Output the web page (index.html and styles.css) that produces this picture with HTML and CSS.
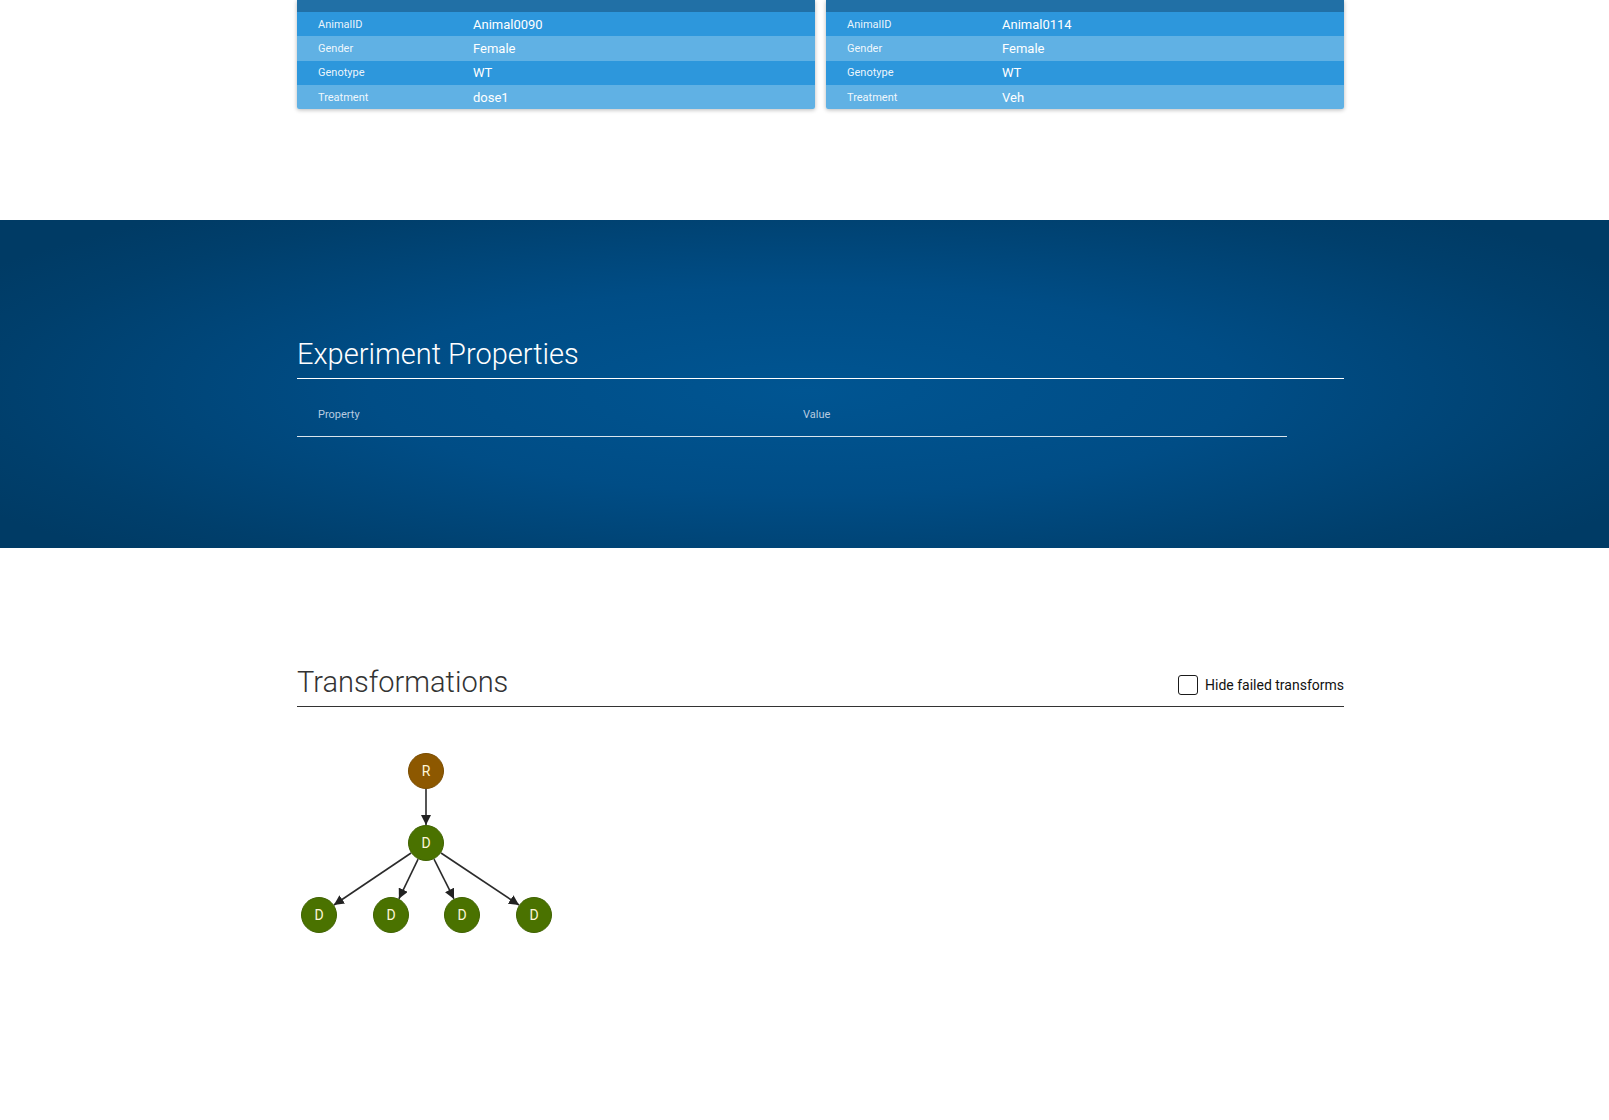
FILE: index.html
```html
<!DOCTYPE html>
<html>
<head>
<meta charset="utf-8">
<link rel="stylesheet" href="styles.css">
</head>
<body>
<section class="animals">
  <div class="wrap cards">
    <div class="card">
      <div class="card-head"></div>
      <div class="row odd"><span class="k">AnimalID</span><span class="v">Animal0090</span></div>
      <div class="row even"><span class="k">Gender</span><span class="v">Female</span></div>
      <div class="row odd"><span class="k">Genotype</span><span class="v">WT</span></div>
      <div class="row even"><span class="k">Treatment</span><span class="v">dose1</span></div>
    </div>
    <div class="card">
      <div class="card-head"></div>
      <div class="row odd"><span class="k">AnimalID</span><span class="v">Animal0114</span></div>
      <div class="row even"><span class="k">Gender</span><span class="v">Female</span></div>
      <div class="row odd"><span class="k">Genotype</span><span class="v">WT</span></div>
      <div class="row even"><span class="k">Treatment</span><span class="v">Veh</span></div>
    </div>
  </div>
</section>

<section class="band">
  <div class="wrap">
    <h2 class="title light">Experiment Properties</h2>
    <table class="props">
      <thead>
        <tr><th class="c1">Property</th><th>Value</th></tr>
      </thead>
    </table>
  </div>
</section>

<section class="transforms">
  <div class="wrap">
    <div class="t-head">
      <h2 class="title dark">Transformations</h2>
      <label class="hide"><input type="checkbox" class="cb"><span>Hide failed transforms</span></label>
    </div>
    <svg class="graph" width="260" height="200" viewBox="0 0 260 200">
      <defs>
        <marker id="arr" markerUnits="userSpaceOnUse" markerWidth="10" markerHeight="10" refX="10" refY="5" orient="auto">
          <path d="M0,0 L10,5 L0,10 z" fill="#222"/>
        </marker>
      </defs>
      <g class="edges" stroke="#2b2b2b" stroke-width="1.6">
        <line x1="129" y1="50" x2="129" y2="86" marker-end="url(#arr)"/>
        <line x1="114.1" y1="114" x2="36.9" y2="166" marker-end="url(#arr)"/>
        <line x1="121.1" y1="120.2" x2="101.9" y2="159.8" marker-end="url(#arr)"/>
        <line x1="137" y1="120.1" x2="157" y2="159.9" marker-end="url(#arr)"/>
        <line x1="144" y1="114" x2="222" y2="166" marker-end="url(#arr)"/>
      </g>
      <g class="nodes">
        <circle cx="129" cy="32" r="17.5" fill="#8d5800" stroke="#7a4c00" stroke-width="1"/>
        <circle cx="129" cy="104" r="17.5" fill="#4a7200" stroke="#3f6200" stroke-width="1"/>
        <circle cx="22" cy="176" r="17.5" fill="#4a7200" stroke="#3f6200" stroke-width="1"/>
        <circle cx="94" cy="176" r="17.5" fill="#4a7200" stroke="#3f6200" stroke-width="1"/>
        <circle cx="165" cy="176" r="17.5" fill="#4a7200" stroke="#3f6200" stroke-width="1"/>
        <circle cx="237" cy="176" r="17.5" fill="#4a7200" stroke="#3f6200" stroke-width="1"/>
      </g>
      <g class="labels" fill="#fff6d8" font-family="Roboto, sans-serif" font-size="14" text-anchor="middle">
        <text x="129" y="37">R</text>
        <text x="129" y="109">D</text>
        <text x="22" y="181">D</text>
        <text x="94" y="181">D</text>
        <text x="165" y="181">D</text>
        <text x="237" y="181">D</text>
      </g>
    </svg>
  </div>
</section>
</body>
</html>
```

FILE: styles.css
```css
html, body {
  margin: 0;
  padding: 0;
  background: #ffffff;
  font-family: Roboto, "Liberation Sans", Arial, sans-serif;
}

.wrap {
  margin-left: 297px;
  width: 1047px;
}

/* animal cards */
.animals {
  padding-bottom: 111px;
}

.cards {
  display: grid;
  grid-template-columns: 1fr 1fr;
  column-gap: 11px;
}

.card {
  box-shadow: 0 1px 4px rgba(0, 0, 0, 0.28);
  border-radius: 0 0 2px 2px;
  overflow: hidden;
}

.card-head {
  height: 12px;
  background: #2170a6;
}

.row {
  display: flex;
  align-items: center;
  height: 24.3px;
  color: #ffffff;
}

.row.odd { background: #2d97dc; }
.row.even { background: #60b1e4; }

.row .k {
  width: 155px;
  padding-left: 21px;
  font-size: 11px;
  color: rgba(255, 255, 255, 0.92);
}

.row .v {
  font-size: 13px;
}

/* experiment band */
.band {
  height: 328px;
  box-sizing: border-box;
  padding-top: 116px;
  background:
    radial-gradient(ellipse 60% 70% at 50% 52%, #005592 0%, #004d86 45%, #003f6c 85%, #003b65 100%);
}

.title {
  margin: 0;
  font-size: 29px;
  line-height: 36px;
  font-weight: 300;
  padding-bottom: 6px;
}

.title.light {
  color: #ffffff;
  border-bottom: 1px solid #ffffff;
}

.title.dark {
  color: #333333;
}

.props {
  margin-top: 13px;
  width: 990px;
  border-collapse: collapse;
}

.props th {
  height: 44px;
  padding: 0 0 0 21px;
  text-align: left;
  font-size: 11px;
  font-weight: 400;
  color: #b7cbe0;
  border-bottom: 1px solid rgba(255, 255, 255, 0.85);
}

.props th.c1 {
  width: 464px;
}

/* transformations */
.transforms {
  padding-top: 116px;
  padding-bottom: 120px;
}

.t-head {
  display: flex;
  justify-content: space-between;
  align-items: flex-end;
  border-bottom: 1px solid #333333;
}

.hide {
  display: flex;
  align-items: center;
  gap: 7px;
  margin-bottom: 11px;
  font-size: 14px;
  color: #111111;
}

.cb {
  appearance: none;
  -webkit-appearance: none;
  margin: 0;
  width: 20px;
  height: 20px;
  box-sizing: border-box;
  border: 1.5px solid #1a1a1a;
  border-radius: 3px;
  background: #ffffff;
}

.graph {
  display: block;
  margin-top: 32px;
}
```
